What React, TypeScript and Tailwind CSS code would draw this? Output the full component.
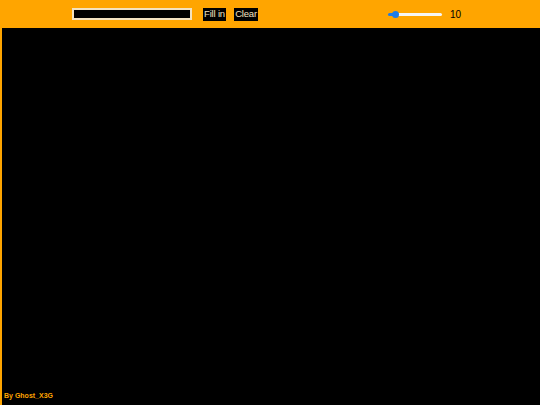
import React, { useState } from 'react';

const App: React.FC = () => {
  const [size, setSize] = useState(10);
  const [text, setText] = useState('');
  const pct = ((size - 1) / 99) * 100;

  return (
    <div className="w-[540px] h-[405px] flex flex-col bg-[#ffa500] overflow-hidden" style={{ fontFamily: '"Liberation Sans", Arial, sans-serif' }}>
      {/* Toolbar */}
      <div className="h-[28px] flex items-center shrink-0">
        <input
          value={text}
          onChange={(e) => setText(e.target.value)}
          className="ml-[72px] w-[120px] h-[12px] bg-black border-2 border-[#f3e2c0] outline-none"
        />
        <button className="ml-[11px] h-[13px] w-[23px] bg-black text-[#f3e2c0] text-[9.5px] tracking-[-0.2px] leading-none">Fill in</button>
        <button className="ml-[8px] h-[13px] w-[24px] bg-black text-[#f3e2c0] text-[9.5px] tracking-[-0.2px] leading-none">Clear</button>
        <input
          type="range"
          min={1}
          max={100}
          value={size}
          onChange={(e) => setSize(Number(e.target.value))}
          className="ml-[130px] w-[54px] h-[3px] rounded-full appearance-none outline-none cursor-pointer [&::-webkit-slider-thumb]:appearance-none [&::-webkit-slider-thumb]:w-[7px] [&::-webkit-slider-thumb]:h-[7px] [&::-webkit-slider-thumb]:rounded-full [&::-webkit-slider-thumb]:bg-[#1c7ce8]"
          style={{ background: `linear-gradient(to right, #1c7ce8 ${pct}%, #f5f5f5 ${pct}%)` }}
        />
        <span className="ml-[8px] text-[10px] text-black">{size}</span>
      </div>

      {/* Canvas */}
      <div className="relative flex-1 bg-black border-l-2 border-[#ffa500]">
        <span className="absolute left-[2px] bottom-[4px] text-[7px] font-bold text-[#ffa500]">By Ghost_X3G</span>
      </div>
    </div>
  );
};

export default App;
